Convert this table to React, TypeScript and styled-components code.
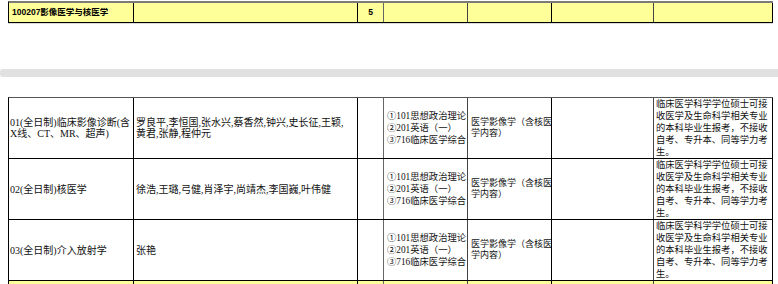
import React from "react";
import styled, { createGlobalStyle } from "styled-components";

const GlobalStyle = createGlobalStyle`
  html, body {
    margin: 0;
    padding: 0;
    background: #ffffff;
  }
  body {
    font-family: "Liberation Serif", "Noto Sans CJK SC", serif;
    color: #111;
  }
`;

const COLS = "125px 224px 26px 84px 84px 102px 119px";

const Page = styled.div`
  width: 778px;
  height: 284px;
  overflow: hidden;
`;

const Sheet = styled.div`
  margin-left: 8px;
  width: 765px;
`;

const TopSheet = styled(Sheet)`
  margin-top: 1px;
  box-shadow: 0 1px 0 #dcdcdc;
`;

const Row = styled.div<{ $bg?: string; $height: number; $top?: string }>`
  display: grid;
  grid-template-columns: ${COLS};
  height: ${(p) => p.$height}px;
  background: ${(p) => p.$bg ?? "#ffffff"};
  border-left: 1px solid #000;
  border-top: ${(p) => p.$top ?? "none"};
  border-bottom: 1px solid #000;
  box-sizing: content-box;
`;

const Cell = styled.div<{ $line?: string; $center?: boolean; $pad?: number }>`
  border-right: 1px solid ${(p) => p.$line ?? "#000"};
  display: flex;
  align-items: center;
  justify-content: ${(p) => (p.$center ? "center" : "flex-start")};
  padding-left: ${(p) => p.$pad ?? 2}px;
  font-size: 10px;
  line-height: 11px;
  overflow: hidden;
  min-width: 0;
`;

const HeadText = styled.span`
  font-family: "Liberation Sans", "Noto Sans CJK SC", sans-serif;
  font-weight: 700;
  font-size: 8.5px;
  color: #000;
`;

const Lines = styled.div<{ $size?: number; $lh?: number }>`
  display: flex;
  flex-direction: column;
  font-size: ${(p) => p.$size ?? 9.5}px;
  line-height: ${(p) => p.$lh ?? 12}px;
  white-space: nowrap;
`;

const Band = styled.div`
  margin-top: 46px;
  height: 8px;
  background: #e1e1e1;
  border-radius: 3px 0 0 3px;
`;

const LowerSheet = styled(Sheet)`
  margin-top: 20px;
`;

const lineColors = ["#000", "#000", "#666", "#444", "#000", "#444", "#000"];

const exam = ["①101思想政治理论", "②201英语（一）", "③716临床医学综合"];
const scope = ["医学影像学（含核医", "学内容）"];
const note = [
  "临床医学科学学位硕士可接",
  "收医学及生命科学相关专业",
  "的本科毕业生报考，不接收",
  "自考、专升本、同等学力考",
  "生。",
];

const programs = [
  {
    name: ["01(全日制)临床影像诊断(含", "X线、CT、MR、超声)"],
    tutors: ["罗良平,李恒国,张水兴,蔡香然,钟兴,史长征,王颖,", "黄君,张静,程仲元"],
  },
  {
    name: ["02(全日制)核医学"],
    tutors: ["徐浩,王璐,弓健,肖泽宇,尚靖杰,李国巍,叶伟健"],
  },
  {
    name: ["03(全日制)介入放射学"],
    tutors: ["张艳"],
  },
];

export default function App() {
  return (
    <Page>
      <GlobalStyle />
      <TopSheet>
        <Row $bg="#ffff99" $height={19} $top="2px solid #7a7a7a">
          <Cell $line={lineColors[0]} $pad={3}>
            <HeadText>100207影像医学与核医学</HeadText>
          </Cell>
          <Cell $line={lineColors[1]} />
          <Cell $line={lineColors[2]} $center $pad={0}>
            <HeadText>5</HeadText>
          </Cell>
          <Cell $line={lineColors[3]} />
          <Cell $line={lineColors[4]} />
          <Cell $line={lineColors[5]} />
          <Cell $line={lineColors[6]} />
        </Row>
      </TopSheet>
      <Band />
      <LowerSheet>
        {programs.map((p, i) => (
          <Row key={i} $height={60} $top={i === 0 ? "1px solid #555" : "none"}>
            <Cell $line={lineColors[0]} $pad={1}>
              <Lines $size={10} $lh={11}>
                {p.name.map((t) => (
                  <span key={t}>{t}</span>
                ))}
              </Lines>
            </Cell>
            <Cell $line={lineColors[1]} $pad={2}>
              <Lines $size={10} $lh={11}>
                {p.tutors.map((t) => (
                  <span key={t}>{t}</span>
                ))}
              </Lines>
            </Cell>
            <Cell $line={lineColors[2]} />
            <Cell $line={lineColors[3]} $pad={3}>
              <Lines $size={9.3} $lh={12}>
                {exam.map((t) => (
                  <span key={t}>{t}</span>
                ))}
              </Lines>
            </Cell>
            <Cell $line={lineColors[4]} $pad={3}>
              <Lines $size={9} $lh={11}>
                {scope.map((t) => (
                  <span key={t}>{t}</span>
                ))}
              </Lines>
            </Cell>
            <Cell $line={lineColors[5]} />
            <Cell $line={lineColors[6]} $pad={2}>
              <Lines $size={9.3} $lh={12.2}>
                {note.map((t) => (
                  <span key={t}>{t}</span>
                ))}
              </Lines>
            </Cell>
          </Row>
        ))}
        <Row $bg="#ffff99" $height={19}>
          {lineColors.map((c, i) => (
            <Cell key={i} $line={c} />
          ))}
        </Row>
      </LowerSheet>
    </Page>
  );
}
